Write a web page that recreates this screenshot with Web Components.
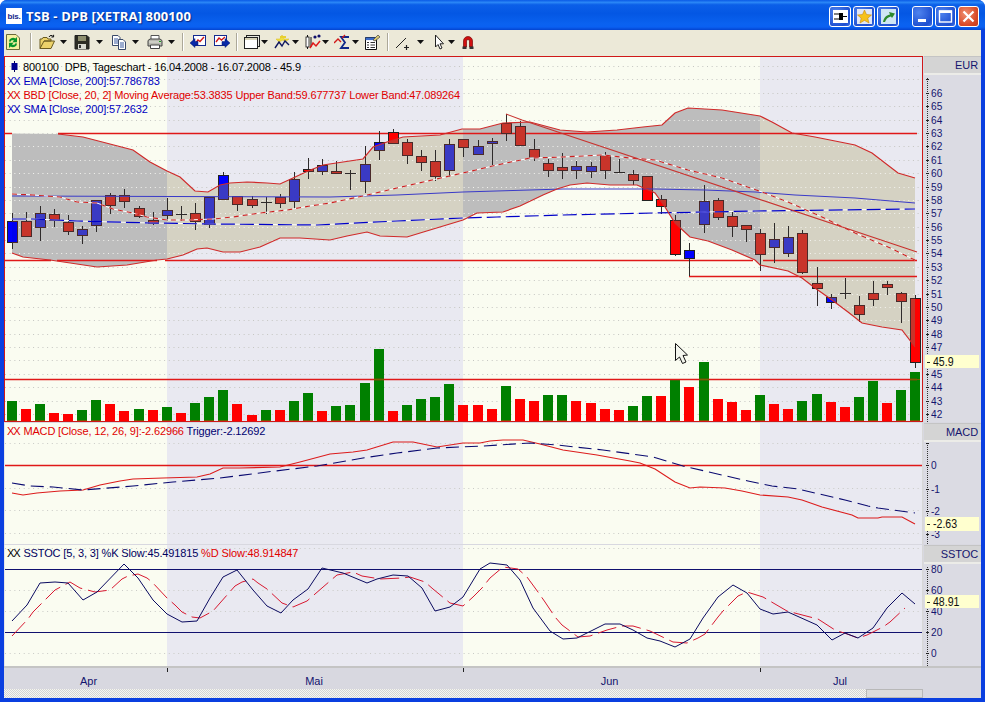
<!DOCTYPE html>
<html><head><meta charset="utf-8"><title>TSB - DPB</title>
<style>html,body{margin:0;padding:0;background:#fff;overflow:hidden}body{width:985px;height:702px;font-family:"Liberation Sans",Arial,sans-serif}</style>
</head><body>
<xp-window>
  <xp-titlebar slot="title" text="TSB - DPB [XETRA] 800100"></xp-titlebar>
  <xp-toolbar slot="toolbar"></xp-toolbar>
  <chart-pane kind="main"></chart-pane>
  <chart-pane kind="macd"></chart-pane>
  <chart-pane kind="sstoc"></chart-pane>
  <time-axis></time-axis>
  <h-scroll></h-scroll>
</xp-window>
<script>
const C=[[12,221,242,213,249,'B'],[26,221,236,212,236,'r'],[40,213,227,206,241,'b'],[54,214,220,209,227,'r'],[68,222,231,215,235,'r'],[82,229,235,226,244,'b'],[96,200,225,200,232,'b'],[110,195,205,193,214,'r'],[124,195,201,189,208,'r'],[139,208,216,206,218,'r'],[153,220,223,212,225,'r'],[167,210,215,198,221,'b'],[181,214,214,206,221,'d'],[195,213,221,203,230,'r'],[209,197,224,197,228,'b'],[223,175,199,172,199,'b'],[237,196,204,196,211,'r'],[252,199,205,196,208,'r'],[266,202,202,197,214,'d'],[280,197,203,194,208,'r'],[294,179,201,172,209,'b'],[308,169,171,158,179,'r'],[322,165,171,159,175,'b'],[336,171,173,161,174,'r'],[350,173,173,170,190,'d'],[365,164,181,146,193,'b'],[379,142,150,131,160,'b'],[393,132,143,129,143,'r'],[407,142,155,139,164,'r'],[421,156,162,150,171,'r'],[435,161,176,150,181,'r'],[449,144,170,139,177,'b'],[463,139,147,139,157,'r'],[478,146,154,140,155,'b'],[492,141,143,138,165,'b'],[506,123,133,114,141,'r'],[520,126,145,121,145,'r'],[534,149,157,139,161,'r'],[548,163,170,159,177,'r'],[562,167,170,153,179,'r'],[576,166,170,161,179,'b'],[591,166,171,162,178,'b'],[605,155,170,152,179,'r'],[619,172,172,159,172,'d'],[633,174,180,170,185,'r'],[647,176,200,176,200,'r'],[661,199,206,195,214,'r'],[675,220,254,215,256,'r'],[689,250,258,243,276,'b'],[704,201,224,185,233,'b'],[718,200,217,198,220,'r'],[732,216,226,211,237,'r'],[746,225,229,225,242,'r'],[760,233,254,229,271,'r'],[774,239,247,223,263,'b'],[788,237,253,226,257,'b'],[802,233,272,230,274,'r'],[817,283,288,267,306,'r'],[831,297,302,294,309,'b'],[845,293,293,278,299,'d'],[859,305,314,296,322,'r'],[873,293,299,281,306,'r'],[887,284,287,281,295,'r'],[901,293,301,292,323,'r'],[915,298,362,295,368,'r']];
const V="401g 409r 404g 413r 414r 410g 400g 404r 411r 409g 410r 407g 413r 403g 397g 390g 404r 415r 410g 410r 401g 393g 411r 406g 405g 383g 349g 411r 405g 399g 397g 384g 405r 405r 409r 386g 399r 401r 395g 395g 401r 403r 409r 410r 406g 396g 396r 379g 387r 362g 399r 402r 410r 395g 404r 409r 401g 394g 402r 407r 397g 381g 403r 390g 372g".split(' ');
const UP=[[12,133.5],[58,134],[83,137],[110,144],[133,150],[150,162],[167,171],[180,177],[195,191],[208,192],[220,185],[230,183],[247,182],[267,183],[280,184],[293,178],[308,171],[323,165],[363,159],[373,147],[387,142],[403,137],[440,135],[462,129],[480,129],[503,123],[530,122],[560,130],[587,132],[617,130],[643,127],[662,125],[675,113],[688,108],[722,110],[760,116],[772,122],[792,133],[815,137],[855,145],[872,153],[898,173],[915,178]];
const LO=[[12,253],[23,257],[50,260],[77,264],[97,267],[127,265],[157,260],[167,259],[183,255],[197,249],[207,248],[223,252],[240,252],[260,247],[280,238],[300,238],[330,240],[347,236],[367,232],[380,236],[407,237],[430,230],[463,220],[477,213],[503,212],[520,206],[543,195],[557,189],[570,185],[587,183],[610,185],[637,185],[655,193],[665,207],[675,223],[690,237],[708,241],[732,250],[755,260],[760,265],[788,271],[802,278],[815,288],[832,300],[848,312],[862,323],[882,327],[902,330],[915,347]];
const MA=[[12,194],[33,195],[60,197],[77,202],[97,203],[113,209],[133,213],[147,217],[167,220],[187,220],[213,219],[233,217],[260,213],[287,210],[310,206],[330,203],[363,196],[397,188],[463,173],[497,165],[530,158],[563,157],[603,155],[630,158],[655,160],[688,170],[722,178],[762,192],[788,202],[822,217],[855,233],[888,247],[915,260]];
const EMA=[[12,196],[330,197],[397,195],[463,192],[530,190],[563,189],[655,189],[705,190],[755,192],[795,195],[855,198],[915,203]];
const SMA=[[12,219],[33,219],[77,221],[150,223],[213,224],[317,225],[397,221],[463,218],[497,217],[563,215],[653,213],[705,212],[755,211],[915,209]];
const MACD=[[12,493],[23,495],[37,493],[60,491],[83,490],[100,485],[120,481],[133,479],[163,478],[197,477],[210,474],[223,468],[240,468],[280,467],[300,462],[330,454],[353,452],[367,450],[393,442],[413,442],[437,447],[463,443],[480,443],[490,441],[503,440],[523,440],[540,444],[563,450],[597,455],[630,461],[640,463],[655,469],[675,482],[690,488],[700,487],[725,488],[742,491],[760,495],[788,497],[802,500],[822,507],[852,515],[858,518],[878,518],[882,517],[902,517],[915,524]];
const TRIG=[[12,483],[30,486],[53,487],[83,490],[133,486],[173,482],[220,478],[267,472],[317,466],[363,458],[397,453],[437,448],[483,446],[530,443],[557,445],[603,450],[653,457],[683,466],[722,475],[748,481],[772,486],[798,489],[845,500],[868,506],[878,508],[915,513]];
const KK=[[12,621],[27,605],[40,583],[55,582],[68,583],[83,600],[97,592],[124,564],[138,578],[153,600],[167,614],[182,622],[197,621],[210,598],[223,577],[237,570],[253,590],[267,606],[281,613],[293,600],[308,589],[322,568],[343,573],[367,583],[377,579],[393,575],[408,576],[422,588],[435,611],[450,607],[463,597],[480,569],[490,563],[507,565],[520,580],[533,608],[550,631],[563,639],[577,638],[605,624],[620,624],[633,630],[647,638],[660,641],[675,647],[690,639],[703,618],[718,597],[733,585],[747,593],[760,609],[773,614],[788,612],[817,625],[832,640],[845,633],[858,638],[873,628],[887,608],[902,593],[915,604]];
const DD=[[12,636],[28,619],[33,612],[48,597],[55,590],[70,582],[80,588],[95,592],[110,590],[122,579],[128,576],[138,574],[147,578],[152,582],[167,598],[175,605],[182,612],[192,617],[200,618],[213,611],[220,603],[235,586],[242,582],[253,579],[258,583],[267,589],[282,603],[293,607],[307,601],[330,581],[337,575],[353,572],[362,576],[380,579],[402,578],[410,577],[425,582],[433,589],[450,603],[463,606],[473,597],[482,588],[490,578],[503,567],[518,569],[527,577],[538,592],[545,602],[555,617],[562,625],[578,637],[590,636],[607,630],[622,626],[633,626],[650,631],[673,642],[687,643],[698,638],[705,634],[718,617],[723,611],[738,596],[747,592],[763,597],[787,611],[810,617],[818,619],[835,630],[847,634],[858,638],[867,635],[883,627],[890,622],[905,608]];
const P=a=>'M'+a.map(p=>p.join(' ')).join('L');
const PALE='#fafcf1',LAV='#e9e9f1',X0=5,X1=922,RED='#e01818';
function cols(y0,y1){const h=y1-y0;return [[X0,167,PALE],[167,463,LAV],[463,760,PALE],[760,X1,LAV]].map(c=>`<rect x="${c[0]}" y="${y0}" width="${c[1]-c[0]}" height="${h}" fill="${c[2]}"/>`).join('')}
function dots(ys,col){return ys.map(y=>`<path d="M${X0} ${y+.5}H${X1}" stroke="${col}" stroke-width="1" stroke-dasharray="1 3.68" fill="none"/>`).join('')}
function hl(y,col,segs,w){return segs.map(s=>`<path d="M${s[0]} ${y+.5}H${s[1]}" stroke="${col}" stroke-width="${w||1.4}" fill="none"/>`).join('')}
function mainSvg(){
 const band=[...UP,...[...LO].reverse()];
 const ys=[];for(let k=-5;k<=21;k++){ys.push(Math.round(133+k*13.38))}
 let s=cols(57,421)+dots(ys,'#c5c6c2');
 s+=`<defs><clipPath id="band"><path d="${P(band)}Z"/></clipPath></defs>`;
 s+=`<g clip-path="url(#band)"><rect x="5" y="57" width="162" height="364" fill="#bdbdbd"/><rect x="167" y="57" width="296" height="364" fill="#d5d2c3"/><rect x="463" y="57" width="297" height="364" fill="#bdbdbd"/><rect x="760" y="57" width="162" height="364" fill="#d5d2c3"/>${dots(ys,'#f4f4f0')}</g>`;
 s+=V.map((v,i)=>{const x=C[i][0]-5,t=parseInt(v),g=v.endsWith('g');let o=`<rect x="${x}" y="${t}" width="10" height="${421-t}" fill="${g?'#008000':'#ff0000'}"/>`;if(g)o+=`<rect x="${x}" y="420" width="10" height="1" fill="#6a5a00"/>`;return o}).join('');
 s+=hl(133,RED,[[5,12],[58,917]])+hl(260,RED,[[5,51],[57,157],[165,753],[763,917]])+hl(276,RED,[[689,917]])+hl(379,RED,[[5,917]]);
 s+=V.map((v,i)=>parseInt(v)<379&&v.endsWith('g')?`<rect x="${C[i][0]-5}" y="379" width="10" height="1" fill="#7a6000"/>`:'').join('');
 const col={r:['#ff0000','#c8342a'],b:['#0000ff','#3a3ac4'],B:['#0000ff','#0000f0']};
 let wick='',bright='',dim='',dj='';
 C.forEach(c=>{const [x,t,b,wt,wb,k]=c;wick+=`<path d="M${x+.5} ${wt}V${wb}"/>`;
  if(k==='d'){dj+=`<path d="M${x-5} ${t+.5}H${x+6}"/>`;return}
  const r=`x="${x-4.5}" y="${t+.5}" width="10" height="${Math.max(b-t,2)}"`;
  bright+=`<rect ${r} fill="${col[k][0]}"/>`;dim+=`<rect ${r} fill="${col[k][1]}"/>`;});
 s+=`<g stroke="#2e2a2a" fill="none">${wick}${dj}</g><g stroke="#222">${bright}</g><g stroke="#4a2a2a" clip-path="url(#band)">${dim}</g>`;
 s+=`<path d="${P(EMA)}" fill="none" stroke="#3a3ac8"/>`;
 s+=`<g clip-path="url(#band)" fill="none" stroke="#fff"><path d="${P(SMA)}"/><path d="${P(MA)}"/></g>`;
 s+=`<path d="${P(SMA)}" fill="none" stroke="#0000c8" stroke-width="1.2" stroke-dasharray="14 5"/>`;
 s+=`<path d="${P(MA)}" fill="none" stroke="#cc2020" stroke-width="1.1" stroke-dasharray="5 4"/>`;
 s+=`<path d="${P(UP.slice(1))}" fill="none" stroke="#d02a2a" stroke-width="1.2"/><path d="${P(LO)}" fill="none" stroke="#d02a2a" stroke-width="1.2"/>`;
 s+=`<path d="M506 114L522 120L917 252" fill="none" stroke="#c9332f" stroke-width="1.1"/>`;
 s+=`<path d="M675.5 343.5V360.5L679.5 357L682.5 363.5L686 362L683 355.5L687.5 355Z" fill="#f4f6ee" stroke="#111"/>`;
 return s;
}
function macdSvg(){
 let s=cols(423,544)+dots([443,465,488,510,533],'#c9cac6');
 s+=hl(465,RED,[[5,922]]);
 s+=`<path d="${P(MACD)}" fill="none" stroke="#dc1c1c" stroke-width="1.1"/>`;
 s+=`<path d="${P(TRIG)}" fill="none" stroke="#0a0a70" stroke-width="1.1" stroke-dasharray="13 6"/>`;
 return s;
}
function stocSvg(){
 let s=cols(545,666)+dots([548,590,611,653],'#c9cac6');
 s+=hl(569,'#10106e',[[5,922]],1.2)+hl(632,'#10106e',[[5,922]],1.2);
 s+=`<path d="${P(DD)}" fill="none" stroke="#d81830" stroke-dasharray="19 6"/>`;
 s+=`<path d="${P(KK)}" fill="none" stroke="#0a0a60"/>`;
 return s;
}
const PANES={
 main:{y0:57,h:364,svg:mainSvg,top:56,height:366,red:true,head:'EUR',headH:17,
  legend:[['#000',`<svg width="11" height="11" viewBox="0 0 11 11" style="vertical-align:-1px;margin:0 3px 0 2px"><path d="M5.5 0V11" stroke="#000058"/><rect x="2.5" y="2" width="6" height="7" fill="#000090"/></svg>800100&nbsp; DPB, Tageschart - 16.04.2008 - 16.07.2008 - 45.9`],
   ['#0000c0','<i>XX</i> EMA [Close, 200]:57.786783'],
   ['#e00000','<i>XX</i> BBD [Close, 20, 2] Moving Average:53.3835 Upper Band:59.677737 Lower Band:47.089264'],
   ['#0000c0','<i>XX</i> SMA [Close, 200]:57.2632']],
  ticks:(()=>{const a=[];for(let p=66;p>=42;p--)if(p!=46)a.push([p,Math.round(133+(63-p)*13.38)]);return a})(),stubs:[79],tag:['45.9',355,368]},
 macd:{y0:423,h:121,svg:macdSvg,top:423,height:121,head:'MACD',headH:17,
  legend:[['#e00000','<i>XX</i> MACD [Close, 12, 26, 9]:-2.62966 <b style="font-weight:400;color:#000070">Trigger:-2.12692</b>']],
  ticks:[['0',465],['-1',489],['-2',511],['-3',534]],stubs:[443],tag:['-2.63',517,531]},
 sstoc:{y0:545,h:121,svg:stocSvg,top:545,height:121,head:'SSTOC',headH:17,
  legend:[['#000060','<i style="color:#000">XX</i> SSTOC [5, 3, 3] %K Slow:45.491815 <b style="font-weight:400;color:#e00000">%D Slow:48.914847</b>']],
  ticks:[['80',569],['60',590],['40',611],['20',632],['0',653]],stubs:[],tag:['48.91',595,608]}
};
class ChartPane extends HTMLElement{
 connectedCallback(){
  const d=PANES[this.getAttribute('kind')],top=d.top,sr=this.attachShadow({mode:'open'});
  const plotBorder=d.red?'border:1px solid #d01818;':'border-left:1px solid #e6e6e6;border-right:1px solid #d8d8d8;';
  const hdH=d.headH+2;
  const ticks=d.ticks.map(t=>`<span class="t" style="top:${t[1]-top-6-hdH}px"><u></u><em>${t[0]}</em></span>`).join('')+(d.stubs||[]).map(y=>`<span class="t" style="top:${y-top-6-hdH}px"><u></u></span>`).join('');
  sr.innerHTML=`<style>
  :host{display:flex;height:${d.height}px;flex:none;margin-bottom:1px}
  .plot{position:relative;width:919px;box-sizing:border-box;${plotBorder}height:100%;overflow:hidden}
  svg.c{display:block}
  .leg{position:absolute;left:2px;top:${d.red?3:1}px;font:11px/14px "Liberation Sans",Arial,sans-serif;white-space:pre;letter-spacing:-.145px}
  .leg i{font-style:normal;letter-spacing:-1.1px;margin-right:1px}
  .ax{margin-left:1px;width:57px;display:flex;flex-direction:column;background:#dbdbe3;color:#14146e;font:11px "Liberation Sans",Arial,sans-serif}
  .hd{height:${d.headH-1}px;flex:none;background:#d4d4d4;border-top:1px solid #c4c4c4;border-bottom:2px solid #ecece8;text-align:right;padding-right:3px;line-height:17px;letter-spacing:-.1px}
  .bd{position:relative;flex:1}
  .bd::before{content:"";position:absolute;left:3px;top:3px;bottom:0;border-left:1px dotted #333}
  .t{position:absolute;left:2px;height:12px;font:11.5px/12px "Liberation Sans",sans-serif;white-space:pre}
  .t u,.tag u{display:inline-block;width:3px;height:1px;background:#222;vertical-align:3px;margin-right:2px}
  .tag u{margin-right:3px}
  em{font-style:normal;display:inline-block;transform:scaleX(.88);transform-origin:0 50%}
  .tag{position:absolute;left:1px;width:54px;box-sizing:border-box;background:#ffffcf;padding-left:2px;color:#111;font:12px/14px "Liberation Sans",sans-serif;white-space:pre}
  </style>
  <div class="plot"><svg class="c" width="917" height="${d.h}" viewBox="5 ${d.y0} 917 ${d.h}">${d.svg()}</svg>
   <div class="leg">${d.legend.map(l=>`<div style="color:${l[0]}">${l[1]}</div>`).join('')}</div></div>
  <div class="ax"><div class="hd">${d.head}</div><div class="bd">${ticks}<span class="tag" style="top:${d.tag[1]-top-hdH}px;height:${d.tag[2]-d.tag[1]}px"><u></u><em>${d.tag[0]}</em></span></div></div>`;
 }
}
customElements.define('chart-pane',ChartPane);
class XpWindow extends HTMLElement{constructor(){super();this.attachShadow({mode:'open'}).innerHTML=`<style>
 :host{display:flex;flex-direction:column;width:985px;height:702px;background:#0a3fe0;border-radius:7px 7px 0 0;overflow:hidden}
 .b{flex:1;display:flex;flex-direction:column;padding:0 4px 4px 4px;min-height:0}
 .in{flex:1;background:#d8d8e0;display:flex;flex-direction:column;min-height:0}
 </style><slot name="title"></slot><div class="b"><slot name="toolbar"></slot><div class="in"><slot></slot></div></div>`}}
customElements.define('xp-window',XpWindow);
const CAP=(inner)=>`<span class="btn h">${inner}</span>`;
class XpTitlebar extends HTMLElement{connectedCallback(){this.attachShadow({mode:'open'}).innerHTML=`<style>
 :host{display:flex;align-items:center;height:30px;flex:none;padding:3px 6px 0 6px;box-sizing:border-box;background:linear-gradient(180deg,#0a5ae6 0,#2a86f6 8%,#0b5fe8 16%,#0457e4 45%,#0a62f0 80%,#0a60f2 90%,#0444d0 100%)}
 .ico{width:16px;height:16px;background:#fff;display:flex;align-items:center;justify-content:center;color:#12268c;font:bold 8px "Liberation Sans",sans-serif;letter-spacing:-.2px;margin-right:4px;margin-top:-1px}
 .txt{color:#fff;font:bold 13px "Open Sans","Liberation Sans",sans-serif;letter-spacing:.13px;text-shadow:1px 1px 1px #0a2a88;white-space:pre;flex:1;margin-top:-1px}
 .btn{width:21px;height:21px;box-sizing:border-box;border:1px solid #fff;border-radius:3px;display:flex;align-items:center;justify-content:center;background:radial-gradient(circle at 30% 30%,#4f83ee,#1d4ed0 75%,#3e72e6);flex:none}
 .h{width:22px}
 .r{display:flex;gap:2px;margin-top:-1px}
 .m{margin-left:11px}
 .cl{background:radial-gradient(circle at 35% 35%,#f09070,#d84a28 65%,#c83a18)}
 </style><span class="ico">bis.</span><span class="txt">${this.getAttribute('text')}</span>
 <div class="r">
 ${CAP('<svg width="15" height="13" viewBox="0 0 15 13"><rect width="15" height="13" fill="#fff"/><path d="M1 4H10M1 9H10M10 6.5H14" stroke="#000" fill="none"/><rect x="6" y="3" width="4" height="7"/></svg>')}
 ${CAP('<svg width="15" height="15" viewBox="0 0 15 15"><rect width="15" height="15" fill="#dfe6f6"/><path d="M7.5 1L9.5 5.5L14.5 6L10.8 9.2L12 14L7.5 11.4L3 14L4.2 9.2L.5 6L5.5 5.5Z" fill="#f6c21c" stroke="#c88a10" stroke-width=".6"/></svg>')}
 ${CAP('<svg width="15" height="15" viewBox="0 0 15 15"><rect width="15" height="15" fill="#cfe6f4"/><path d="M2 13C3 8 6 6 9 5.5L8 3L14 4.5L11 9L10 7.5C7 8 5 10 4 13Z" fill="#2d8a2d"/></svg>')}
 <span class="btn m"><svg width="13" height="13" viewBox="0 0 13 13"><rect x="2" y="9" width="8" height="3" fill="#fff"/></svg></span>
 <span class="btn"><svg width="15" height="15" viewBox="0 0 15 15"><rect x="1.5" y="2" width="12" height="11" fill="none" stroke="#fff" stroke-width="1.4"/><rect x="1" y="1.5" width="13" height="2.5" fill="#fff"/></svg></span>
 <span class="btn cl"><svg width="15" height="15" viewBox="0 0 15 15"><path d="M2.5 2.5L12.5 12.5M12.5 2.5L2.5 12.5" stroke="#fff" stroke-width="2.2"/></svg></span>
 </div>`}}
customElements.define('xp-titlebar',XpTitlebar);
const ICONS={
refresh:'<path d="M1.5 .5H11L14.5 4V15.5H1.5Z" fill="#f6f0a0" stroke="#6a6a3a"/><path d="M4 7.5A4 3.6 0 0 1 10.4 4.6L12 3V8.2H7.4L9 6.4A2.3 2 0 0 0 5.6 7.8Z" fill="#08962a"/><path d="M12 9.5A4 3.6 0 0 1 5.6 12.4L4 14V8.8H8.6L7 10.6A2.3 2 0 0 0 10.4 9.2Z" fill="#08962a"/>',
open:'<path d="M1 14.5V5H3L4 3.5H8L9 5H12V7H5L1 14.5H12L15.5 7H5" fill="#ecd26a" stroke="#6a5a20"/><path d="M10 3C11 1 13 1 14 2.5M14.6 .8V3H12.4" fill="none" stroke="#111"/>',
save:'<path d="M1 1.5H13L15 3.5V15H1Z" fill="#2c2c24" stroke="#222"/><rect x="4" y="2" width="8" height="5" fill="#8e8e6e"/><rect x="4" y="10" width="8" height="5" fill="#d9d9d0"/><rect x="5" y="11" width="2" height="3" fill="#333"/>',
copy:'<path d="M1.5 1.5H7L9 3.5V11.5H1.5Z" fill="#fff" stroke="#3a4a6a"/><path d="M3 5H7M3 7H7M3 9H7" stroke="#3a5aa0"/><path d="M7.5 5.5H12L14.5 8V15.5H7.5Z" fill="#fff" stroke="#3a4a6a"/><path d="M9 9H13M9 11H13M9 13H13" stroke="#3a5aa0"/>',
print:'<path d="M4 1.5H12V6H4Z" fill="#fff" stroke="#555"/><path d="M1 6.5L3 5H13L15 6.5V12H1Z" fill="#b9b9b0" stroke="#444"/><path d="M2 8H14" stroke="#e4e4dc"/><path d="M3.5 11H12.5V14.5H3.5Z" fill="#fff" stroke="#444"/><path d="M12 7.5H14" stroke="#1aa01a"/>',
back:'<rect x="3.5" y="1.5" width="12" height="10" fill="#fff" stroke="#142a90"/><path d="M5 10L8 6L10 7.5L14 3" fill="none" stroke="#d01818" stroke-width="1.4"/><path d="M0 9L5 4.5V7.5H8V11H5V13.5Z" fill="#0a2aa8" stroke="#0a1a70" stroke-width=".5"/>',
next:'<rect x=".5" y="1.5" width="12" height="10" fill="#fff" stroke="#142a90"/><path d="M2 8L5 4L7.5 6L11 3" fill="none" stroke="#d01818" stroke-width="1.4"/><path d="M16 9L11 4.5V7.5H8V11H11V13.5Z" fill="#0a2aa8" stroke="#0a1a70" stroke-width=".5"/>',
win:'<rect x="2.5" y="1.5" width="13" height="11" fill="#e8e8e0" stroke="#222"/><rect x=".5" y="3.5" width="13" height="11" fill="#fff" stroke="#222"/><rect x="1" y="4" width="12" height="2" fill="#d8d4b8"/>',
stars:'<path d="M2 5H6L8 1L10 5H15L11 8L9 6L5 8Z" fill="#f0e040" stroke="#d8b820" stroke-width=".5"/><path d="M6 3L12 3" stroke="#e8d030" stroke-width="2"/><path d="M1 14L5 8L8 12L11 7L15 11" fill="none" stroke="#101860" stroke-width="1.4"/>',
candles:'<path d="M2.5 1V15M6 3V13" stroke="#111"/><rect x="1" y="3" width="3" height="10" fill="#fff" stroke="#111" stroke-width=".8"/><circle cx="10" cy="3" r="1.6" fill="#10106a"/><circle cx="14" cy="2" r="1.6" fill="#10106a"/><path d="M5 14L8 9L11 12L15 7" fill="none" stroke="#e01818" stroke-width="1.5"/>',
sigma:'<path d="M0 9L4 5L7 8" fill="none" stroke="#d01818" stroke-width="1.4"/><path d="M15 3H7L11 8.5L7 14H15" fill="none" stroke="#10288a" stroke-width="1.8"/><path d="M8 4L11 1" stroke="#d01818" stroke-width="1.2"/>',
prop:'<path d="M1.5 3.5H12.5V15.5H1.5Z" fill="#fff" stroke="#111"/><rect x="1.5" y="3.5" width="11" height="2.6" fill="#3a6ac8"/><path d="M3 8.5H5M6.5 8.5H11M3 11H5M6.5 11H11M3 13.5H5M6.5 13.5H11" stroke="#333"/><path d="M9 6L14 1L16 3L11 7Z" fill="#d8c870" stroke="#444" stroke-width=".7"/>',
line:'<path d="M1 14L11 4" stroke="#222"/><path d="M9 13.5H14M11.5 11V16" stroke="#222" stroke-width="1.2"/>',
cursor:'<path d="M3.5 1V13L6 10.5L8 15L10 14L8 9.8H11.5Z" fill="#fff" stroke="#222"/>',
magnet:'<path d="M3.5 13V7A4.5 4.5 0 0 1 12.5 7V13H9.5V7A1.5 1.5 0 0 0 6.5 7V13Z" fill="#d01010" stroke="#7a0808" stroke-width=".7"/><rect x="2.5" y="12.5" width="4" height="2.5" fill="#333"/><rect x="9.5" y="12.5" width="4" height="2.5" fill="#333"/>'};
const TB=[['refresh',5],['sep',30],['open',39],['dd',60],['save',74],['dd',96],['copy',111],['dd',132],['print',147],['dd',168],['sep',182],['back',190],['next',214],['sep',236],['win',244],['dd',261],['stars',274],['dd',292],['candles',305],['dd',322],['sigma',334],['dd',352],['prop',364],['sep',387],['line',395],['dd',417],['cursor',432],['dd',448],['magnet',460]];
class XpToolbar extends HTMLElement{connectedCallback(){
 let x=4,h='';
 TB.forEach(([n,p])=>{const w=n==='sep'?2:n==='dd'?7:16;const m=p-x;x=p+w;
  if(n==='sep')h+=`<span class="sep" style="margin-left:${m}px"></span>`;
  else if(n==='dd')h+=`<svg style="margin-left:${m}px" width="7" height="4" viewBox="0 0 7 4"><path d="M0 0H7L3.5 4Z" fill="#111"/></svg>`;
  else h+=`<svg style="margin-left:${m}px" width="16" height="16" viewBox="0 0 16 16">${ICONS[n]}</svg>`;});
 this.attachShadow({mode:'open'}).innerHTML=`<style>:host{display:flex;align-items:center;height:26px;flex:none;background:#ece9d8;box-sizing:border-box;padding-bottom:3px}
 .sep{display:block;width:1px;height:18px;background:#aca899;border-right:1px solid #fff;flex:none}svg{flex:none;display:block}</style>${h}`;}}
customElements.define('xp-toolbar',XpToolbar);
class TimeAxis extends HTMLElement{constructor(){super();const m=[['Apr',163,6,0],['Mai',296,0,2],['Jun',297,0,4],['Jul',163,0,3]];
 this.attachShadow({mode:'open'}).innerHTML=`<style>:host{display:flex;height:23px;flex:none;background:#d8d8e0;border-top:2px solid #c4c4c4;box-sizing:border-box;color:#14146e;font:11px "Liberation Sans",Arial,sans-serif;margin-top:-1px}
 .m{position:relative;text-align:center;line-height:27px;box-sizing:border-box;flex:none}
 .m+.m::before{content:"";position:absolute;left:0;top:0;height:4px;width:1px;background:#222}</style>${m.map(a=>`<div class="m" style="width:${a[1]}px;padding:0 ${a[3]}px 0 ${a[2]}px">${a[0]}</div>`).join('')}`}}
customElements.define('time-axis',TimeAxis);
class HScroll extends HTMLElement{constructor(){super();this.attachShadow({mode:'open'}).innerHTML=`<style>:host{display:flex;height:9px;flex:none;background:#d8d8e0}
 .tr{width:919px;display:flex;justify-content:flex-end;background:repeating-conic-gradient(#d4d4d4 0 25%,#f6f6f2 0 50%) 0 0/2px 2px}
 .th{width:57px;background:#dcdcdc;border:1px solid #b8b8b8;box-sizing:border-box}</style><div class="tr"><div class="th"></div></div>`}}
customElements.define('h-scroll',HScroll);
</script>
</body></html>
